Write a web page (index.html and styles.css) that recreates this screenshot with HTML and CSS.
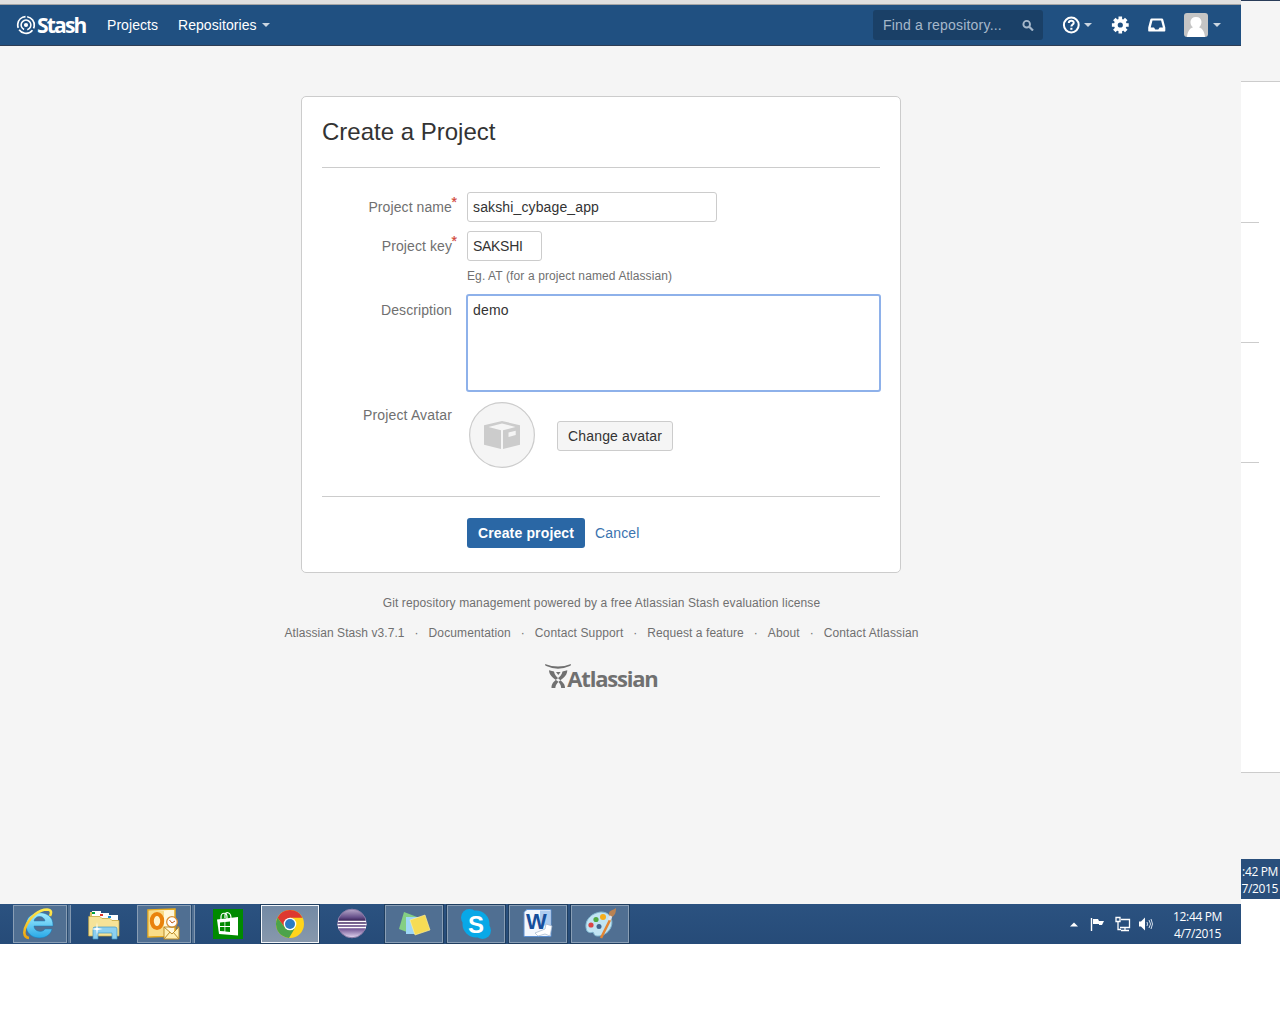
FILE: index.html
```html
<!DOCTYPE html>
<html lang="en">
<head>
<meta charset="utf-8">
<title>Create a Project - Stash</title>
<link rel="stylesheet" href="styles.css">
</head>
<body>
<div class="screens">
<div class="main-screen">
  <div class="chrome-edge"></div>
  <header class="header">
    <a class="brand"><svg width="20" height="20" viewBox="0 0 20 20" fill="none" stroke="#fff"><circle cx="10" cy="10" r="2.1" fill="#fff" stroke="none"/><circle cx="10" cy="10" r="4.900" stroke-width="1.500" stroke-dasharray="26.800 4" transform="rotate(113 10 10)"/><circle cx="10" cy="10" r="8.300" stroke-width="1.700" stroke-dasharray="15.380 2" transform="rotate(-82 10 10)"/></svg><span class="brand-name">Stash</span></a>
    <nav class="nav"><a class="nav-projects">Projects</a><a class="nav-repos">Repositories</a><i class="caret"></i></nav>
    <div class="search"><span>Find a repository...</span><svg width="12" height="12" viewBox="0 0 12 12" fill="none" stroke="#a6b8cb"><circle cx="4.700" cy="5.200" r="3.300" stroke-width="1.900"/><path d="M7.200 7.700L11 11.500" stroke-width="2.200"/></svg></div>
    <div class="tools">
      <svg class="help" width="18" height="18" viewBox="0 0 18 18" fill="none" stroke="#fff"><circle cx="9.300" cy="9" r="7.400" stroke-width="2"/><path d="M6.800 7C7 3.900 11.900 4.100 11.700 7C11.600 8.600 9.400 8.500 9.400 10.600" stroke-width="2"/><path d="M8.300 11.800h2.100v2H8.300z" fill="#fff" stroke="none"/></svg><i class="caret"></i>
      <svg class="gear" width="18" height="18" viewBox="-9.300 -9 18 18"><g fill="#fff"><path fill-rule="evenodd" d="M0-6.300A6.300 6.300 0 1 1 0 6.300A6.300 6.300 0 1 1 0-6.300M0-2.600A2.600 2.600 0 1 0 0 2.600A2.600 2.600 0 1 0 0-2.600"/><path id="tooth" d="M-1.800-8.400h3.600v3h-3.600zM-1.800 5.400h3.600v3h-3.600zM5.400-1.800h3v3.600h-3zM-8.400-1.800h3v3.600h-3z"/><use href="#tooth" transform="rotate(45)"/></g></svg>
      <svg class="inbox" width="18" height="14" viewBox="0 0 18 14"><path fill="#fff" fill-rule="evenodd" d="M3.500 .5h10.500c.6 0 1 .4 1.200 1L17.300 9.500v3c0 .7-.4 1-1 1H1.200c-.7 0-1-.3-1-1V9.500L2.300 1.500C2.500.9 2.900.5 3.500.5M4.500 2.500L2.700 9.500h3.300l1.300 2h3l1.300-2h3.300L13.100 2.500z"/></svg>
      <svg class="user" width="24" height="24" viewBox="0 0 24 24"><rect width="24" height="24" rx="3" fill="#c5c5c5"/><path fill="#fff" d="M12 4c7 0 6.500 8 3 10.300C19.400 15.800 20.500 20 21 24H3c.5-4 1.600-8.200 6-9.700C5.500 12 5 4 12 4"/></svg><i class="caret"></i>
    </div>
  </header>
  <main class="content">
    <form class="card">
      <h1>Create a Project</h1>
      <div class="row"><label><span>Project name</span><b class="req">*</b></label><div class="input input-name">sakshi_cybage_app</div></div>
      <div class="row row-key"><label><span>Project key</span><b class="req">*</b></label><div><div class="input input-key">SAKSHI</div><p class="hint">Eg. AT (for a project named Atlassian)</p></div></div>
      <div class="row row-desc"><label><span>Description</span></label><div class="textarea">demo</div></div>
      <div class="row row-avatar"><label><span>Project Avatar</span></label><div class="avatar-field">
        <svg width="66" height="66" viewBox="0 0 66 66"><circle cx="33" cy="33" r="32.400" fill="#f5f5f5" stroke="#ccc" stroke-width="1.200"/><path fill="#ccc" fill-rule="evenodd" d="M15 23.200L33 19L51 23.200V42.700L34 47V28.200L46.500 25L33 21.500L19.500 25L32 28.200V47L15 42.700zM39.500 30.500V35L46.700 33V28.700z"/></svg>
        <span class="button">Change avatar</span></div></div>
      <div class="actions"><span class="primary">Create project</span><a class="cancel">Cancel</a></div>
    </form>
    <footer class="footer">
      <p class="license">Git repository management powered by a free Atlassian Stash evaluation license</p>
      <ul><li class="version">Atlassian Stash v3.7.1</li><li>Documentation</li><li>Contact Support</li><li class="feature">Request a feature</li><li>About</li><li>Contact Atlassian</li></ul>
      <div class="atlassian"><svg width="27" height="26" viewBox="0 0 27 26" fill="#707070"><path d="M0 1Q13 6 26 1L25.500 2.800Q13 8.500 .5 2.800z"/><path d="M4 7.300L9 8.500C9.500 12 12 14 14.500 16.500C18 19.500 20 21 20 25H16.200C16 21.500 14.500 20 12.500 18C7 14.500 4.300 12 4 7.300M22.300 7.300L17.500 8.500C17 12 14.500 13.800 12.500 15.500C8 19 6.500 21 6.500 25H10.300C10.500 22 12 20 14.500 18C20 14 22 12 22.300 7.300M11 9H15.600L13.300 12z"/></svg><span>Atlassian</span></div>
    </footer>
  </main>
  <div class="taskbar">
    <div class="task open stacked"><svg width="32" height="32" viewBox="0 0 32 32"><defs><linearGradient id="blue" x2="0" y2="1"><stop stop-color="#a5edff"/><stop offset="1" stop-color="#28a9e7"/></linearGradient><linearGradient id="gold" x2="0" y2="1"><stop stop-color="#ffe94e"/><stop offset="1" stop-color="#efa50c"/></linearGradient></defs><path fill="url(#blue)" stroke="#1679b8" stroke-width=".5" fill-rule="evenodd" d="M30 18H11c0 6 9 7 11 3h7C26 34 3 33 3 17C3 1 31 0 30 18M11 13h11c-1-6-10-6-11 0"/><path fill="none" stroke="url(#gold)" stroke-width="2.600" d="M6 30C-6 29 7 2 24 1.500C28 1.500 29 4 27 8"/></svg></div>
    <div class="task"><svg width="32" height="32" viewBox="0 0 32 32"><path fill="#d9c266" d="M2 4h11v4h17v20H1z"/><path fill="#fff" d="M4 3h9v5H4zM12 5h9v5h-9zM20 7h10v5H20z"/><path fill="#00a33c" d="M4 4h3v2H4z"/><path fill="#df3529" d="M12 6h3v2h-3z"/><path fill="#178ed5" d="M20 8h3v2h-3z"/><path fill="#f6e398" stroke="#c6a744" stroke-width=".7" d="M.7 8.500H12l2 2h8l2 2h7V28H.7z"/><path fill="#8bcff0" stroke="#4298c6" stroke-width=".7" d="M5 31V21q0-2 2-2h20q2 0 2 2v10h-5v-6H10v6z"/><path fill="#fff" d="M9 14l.7 6 5 1-5 1L9 28l-.7-6-5-1 5-1z"/></svg></div>
    <div class="task open stacked"><svg width="34" height="34" viewBox="0 0 34 34"><path fill="#fff8dc" stroke="#e9ac1e" stroke-width="1.500" d="M2 3L29 2V29L2 30z"/><path fill="#f9dc88" d="M3 4h15v25H3z"/><ellipse cx="11" cy="14" rx="5.200" ry="7" fill="#fff2c9" stroke="#e9820c" stroke-width="4"/><circle cx="26" cy="15" r="5.300" fill="#fff" stroke="#d98d30" stroke-width="1.300"/><path fill="none" stroke="#c35d17" d="M23.500 13l2.500 3 3-2"/><path fill="#fff0b4" stroke="#bd8b28" d="M18 20h15v12H18zl8 7 7-7M18 32l6-7m9 7l-6-7"/></svg></div>
    <div class="task"><svg width="30" height="30" viewBox="0 0 30 30"><path fill="#008a00" d="M0 0h30v30H0z"/><path fill="#fff" d="M4 10.500L25 8v18.500L6 25z"/><path fill="none" stroke="#fff" stroke-width="1.200" d="M8 11V8c0-5 6-5 6 0v2M12 9V6c0-4 6-3 6 3"/><path fill="#008a00" d="M7 13.500l4.500-.5v4H7zM12.300 13l4.700-.5V17h-4.700zM7 18h4.500v4.300l-4.500-.4zM12.300 18H17v5l-4.700-.5z"/></svg></div>
    <div class="task open active"><svg width="30" height="30" viewBox="-15 -15 30 30"><circle r="14" fill="#ffd51b"/><path fill="#de3930" d="M-12.500-6.300A14 14 0 0 1 12.500-6.300H0L-5.500 3z"/><path fill="#4ca34a" d="M-12.500-6.300L-5.500 3 0 6.300 5 4-1 14A14 14 0 0 1-12.500-6.300"/><circle r="6.300" fill="#fff"/><circle r="5" fill="#2c7bc4"/></svg></div>
    <div class="task"><svg width="32" height="32" viewBox="0 0 32 32"><defs><linearGradient id="purple" x2="0" y2="1"><stop stop-color="#b9aacb"/><stop offset=".28" stop-color="#66508a"/><stop offset=".4" stop-color="#3a2358"/><stop offset=".65" stop-color="#65488b"/><stop offset="1" stop-color="#e6d9f2"/></linearGradient></defs><circle cx="16" cy="15.500" r="14.300" fill="url(#purple)" stroke="#8c7ca8"/><path stroke="#fff" stroke-width="1.300" d="M2 13.500h28M1.500 16.500h29M2 19.500h28"/></svg></div>
    <div class="task open"><svg width="34" height="28" viewBox="0 0 34 28"><path fill="#84cf83" d="M7 2l13 5-5 17-13-5z"/><path fill="#9ed7f6" d="M9 7h13v17H9z"/><path fill="#f6dc55" stroke="#fff0a0" stroke-width=".6" d="M13 10l15-5 5 15-15 5z"/></svg></div>
    <div class="task open"><svg width="32" height="32" viewBox="0 0 32 32"><circle cx="16" cy="16" r="13.500" fill="#08a8e7"/><circle cx="9.500" cy="9.500" r="8.500" fill="#08a8e7"/><circle cx="22.500" cy="22.500" r="8.500" fill="#08a8e7"/><text class="skype-letter" x="16" y="24.500" text-anchor="middle">S</text></svg></div>
    <div class="task open"><svg width="32" height="32" viewBox="0 0 32 32"><path fill="#f3f7fd" stroke="#5c8fd0" d="M5 1.500h24v27H2V4z"/><path fill="#aecdf0" d="M18 2.500h10v15H18z"/><text class="word-letter" x="14.500" y="21" text-anchor="middle">W</text><path fill="#fff" stroke="#a2b4cc" stroke-width=".7" d="M13 25l10-4 1-5 6 2-2 10-5-2-7 2z"/></svg></div>
    <div class="task open"><svg width="34" height="34" viewBox="0 0 34 34"><path fill="#c1e4f3" stroke="#82b9d2" d="M4 24C0 14 8 6 18 5C29 5 31 16 27 22C23 29 12 31 11 27C10 23 8 28 4 24"/><circle cx="16" cy="19.500" r="2.500" fill="#41658f"/><circle cx="8" cy="18" r="2.600" fill="#da4546"/><circle cx="13" cy="12.500" r="2.600" fill="#51aa43"/><circle cx="20" cy="10" r="3" fill="#f5ad1a"/><path stroke="#e28534" stroke-width="2.500" d="M27.500 12L18 31"/><path fill="#b98253" d="M26 9c-1-6 3-5 7-8 0 5-1 7-4 9z"/><path stroke="#e2e5e9" stroke-width="3" d="M28 9l-2 4"/></svg></div>
    <div class="tray">
      <svg width="8" height="6" viewBox="0 0 8 6"><path d="M0 5.500L4 1.500 8 5.500z" fill="#fff"/></svg>
      <svg class="flag" width="18" height="18" viewBox="0 0 18 18"><path d="M2.500 3v13" stroke="#fff" stroke-width="1.400"/><path d="M4 4h5l1 2h5l-2 4h-3V9H4z" fill="#fff"/></svg>
      <svg class="network" width="18" height="18" viewBox="0 0 18 18" fill="none" stroke="#fff" stroke-width="1.300"><path d="M7 4.500h8.500v8H6M11 12.500v3M7 15.500h8M2 2.500h4v4H2zM4 6.500v8h3"/></svg>
      <svg class="volume" width="16" height="16" viewBox="0 0 16 16"><path d="M1 5.500h2l4-4v13l-4-4H1z" fill="#fff"/><path d="M9 6q1 2 0 4M11 4q3 4 0 8M13 3q3 5 0 10" fill="none" stroke="#d5dfeb"/></svg>
      <div class="clock"><span>12:44 PM</span><span>4/7/2015</span></div>
    </div>
  </div>
</div>
<aside class="second-screen">
  <div class="side-top"></div>
  <div class="side-card"><hr><hr><hr></div>
  <div class="side-bottom"></div>
  <div class="side-task"><div class="clock"><span>:42 PM</span><span>7/2015</span></div></div>
</aside>
</div>
</body>
</html>
```
FILE: styles.css
```css
* { box-sizing: border-box; }
body { margin: 0; background: #fff; font: 14px/20px "Liberation Sans", Arial, sans-serif; color: #333; overflow: hidden; }
h1, p, ul, hr { margin: 0; padding: 0; }
svg { display: block; flex: none; }
.screens { display: grid; grid-template-columns: 1241px 39px; height: 1024px; }
.main-screen { display: grid; grid-template-rows: 5px 41px 858px 40px; align-content: start; }
.chrome-edge { background: #dfdfdf; border-bottom: 1px solid #a5a5a5; }
.header { display: flex; align-items: center; background: #205081; border-bottom: 1px solid #2e3d54; color: #fff; padding-left: 16px; white-space: nowrap; }
.brand { display: flex; align-items: center; gap: 1px; width: 91px; }
.brand-name { font: bold 21px/24px "Open Sans", sans-serif; letter-spacing: -1.8px; margin-top: -1px; }
.nav { display: flex; align-items: center; width: 766px; letter-spacing: .06px; }
.nav-projects { width: 71px; }
.nav-repos { width: 84px; }
.caret { width: 0; border: 4px solid transparent; border-top-color: #cbd6e1; border-bottom: 0; }
.search { display: flex; align-items: center; justify-content: space-between; width: 170px; height: 30px; background: #1a4067; border-radius: 3px; padding: 0 9px 0 10px; color: #a6b8cb; letter-spacing: .2px; }
.tools { display: flex; align-items: center; padding-left: 19px; }
.help { margin-right: 4px; }
.gear { margin-left: 19px; }
.inbox { margin-left: 19px; }
.user { margin-left: 18px; margin-right: 5px; }
.content { background: #f5f5f5; padding-top: 50px; }
.card { width: 600px; height: 477px; margin-left: 301px; padding: 0 20px; background: #fff; border: 1px solid #ccc; border-radius: 5px; }
h1 { height: 71px; border-bottom: 1px solid #ccc; font-size: 24px; line-height: 70px; font-weight: normal; margin-bottom: 24px; }
.row { display: grid; grid-template-columns: 130px 1fr; gap: 15px; }
label { position: relative; color: #707070; text-align: right; padding-top: 5px; white-space: nowrap; letter-spacing: .09px; }
.req { position: absolute; left: 129.5px; top: 0; color: #d04437; font-weight: normal; -webkit-text-stroke: .2px #d04437; }
.input { height: 30px; border: 1px solid #ccc; border-radius: 3px; padding: 4px 5px; }
.input-name { width: 250px; letter-spacing: .13px; }
.input-key { width: 75px; letter-spacing: -.3px; }
.row-key { margin-top: 9px; height: 64px; }
.hint { font-size: 12px; line-height: 20px; margin-top: 5px; color: #707070; letter-spacing: .11px; }
.textarea { width: 415px; height: 98px; border: 2px solid #8eb1ea; border-radius: 3px; padding: 4px 5px; margin: -1px -1px 0; letter-spacing: .2px; }
.row-avatar { margin-top: 11px; height: 93px; }
.row-avatar label { padding-top: 2px; letter-spacing: .15px; }
.avatar-field { display: flex; gap: 22px; padding-left: 2px; margin-top: -1px; }
.button { height: 30px; width: 116px; margin-top: 19px; border: 1px solid #ccc; border-radius: 3px; background: #f5f5f5; text-align: center; line-height: 28px; letter-spacing: .16px; }
.actions { border-top: 1px solid #ccc; display: flex; gap: 10px; padding: 21px 0 0 145px; line-height: 30px; }
.primary { width: 118px; height: 30px; border-radius: 3px; background: #2a67a5; color: #fff; font-weight: bold; text-align: center; letter-spacing: .15px; }
.cancel { color: #3b73af; letter-spacing: .15px; }
.footer { width: 641px; margin: 20px 0 0 281px; font-size: 12px; color: #707070; text-align: center; letter-spacing: .12px; }
.footer ul { display: flex; justify-content: center; list-style: none; margin-top: 10px; white-space: nowrap; }
.footer li + li::before { content: "·"; display: inline-block; width: 24px; }
.version, .feature { letter-spacing: .06px; }
.atlassian { display: flex; justify-content: center; height: 26px; margin-top: 20px; }
.atlassian span { width: 92px; margin-left: -5px; font: bold 22px/30px "Open Sans", sans-serif; letter-spacing: -1.2px; }
.taskbar { display: flex; gap: 4px; padding-left: 13px; background: linear-gradient(#2b5280, #264b78); }
.task { display: flex; align-items: center; justify-content: center; width: 58px; height: 40px; }
.open { height: 38px; margin-top: 1px; background: #506f92; border: 1px solid #899eb5; box-shadow: 0 0 0 1px #1f3e60; }
.stacked { width: 54px; margin-right: 4px; padding-right: 2px; box-shadow: 1px 0 0 #294b70, 3px 0 0 #506f92, 4px 0 0 #8298b0; }
.active { background: linear-gradient(#738aa5, #8798ac); border-color: #f3f6fa; }
.skype-letter { font: bold 24px "Liberation Sans", sans-serif; fill: #fff; }
.word-letter { font: bold 22px "Liberation Sans", sans-serif; fill: #174f9b; }
.tray { display: flex; align-items: center; margin-left: auto; padding-right: 19px; color: #fff; }
.flag { margin-left: 11px; }
.network { margin-left: 7px; }
.volume { margin-left: 6px; }
.clock { display: flex; flex-direction: column; align-items: flex-end; padding-top: 2px; font: 12px/17px "Open Sans", sans-serif; letter-spacing: -.35px; white-space: nowrap; }
.tray .clock { align-items: center; margin-left: 19px; }
.second-screen { display: grid; grid-template-rows: 81px 692px 86px 40px; align-content: start; overflow: hidden; }
.side-top { background: #f5f5f5; border-top: 1px solid #293c59; }
.side-bottom { background: #f5f5f5; }
.side-card { border: solid #ccc; border-width: 1px 0; padding-top: 140px; }
hr { width: 18px; height: 1px; border: 0; background: #ccc; margin-bottom: 119px; }
.side-task { display: flex; justify-content: flex-end; align-items: center; background: #294f7c; color: #fff; padding-right: 2px; }
```
